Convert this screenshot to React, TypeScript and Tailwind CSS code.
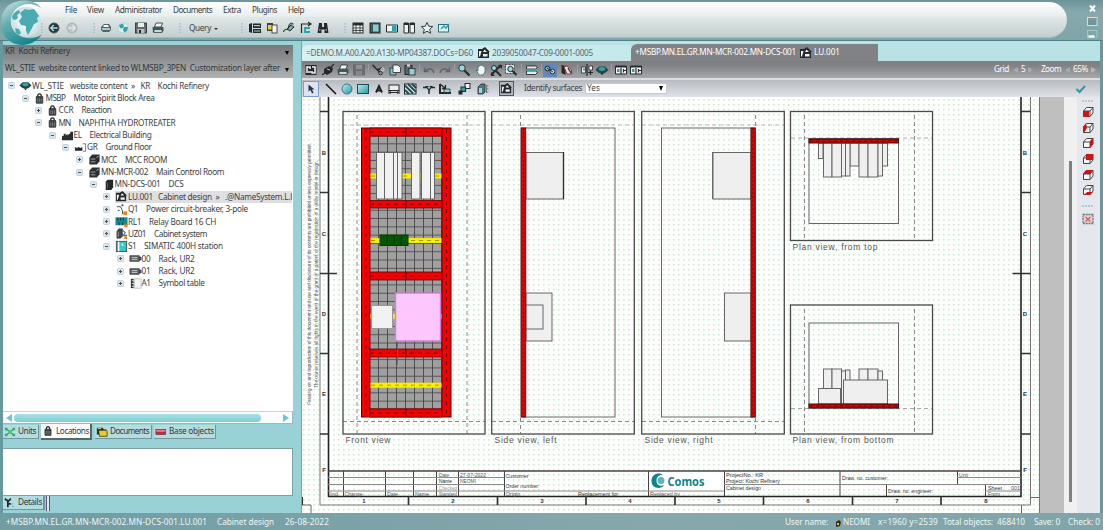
import { useLayoutEffect, useRef, useState } from "react";
import type { ReactNode } from "react";

const K = "#26292b";
const T = "#2aa3ac";

/** Single-line label whose letter spacing is adjusted to fill a given width. */
function Fit({ w, children, className = "" }: { w: number; children: string; className?: string }) {
  const ref = useRef<HTMLSpanElement>(null);
  const [ls, setLs] = useState(0);
  useLayoutEffect(() => {
    if (ref.current) {
      const natural = ref.current.getBoundingClientRect().width;
      setLs((w - natural) / children.length);
    }
  }, [w, children]);
  return (
    <span ref={ref} className={"inline-block shrink-0 whitespace-pre " + className} style={{ letterSpacing: ls }}>
      {children}
    </span>
  );
}

const glyphs: Record<string, ReactNode> = {
  back: (<><circle cx="7" cy="7" r="5" fill="#1d3a3e" stroke="#555" /><path d="M10.5 7H4M6.8 4L3.8 7l3 3" stroke="#a9dde0" strokeWidth="1.4" fill="none" /></>),
  forward: (<><circle cx="7" cy="7" r="5" fill="#bcc5c6" stroke="#a9b3b4" /><path d="M3.5 7H10M7.2 4l3 3-3 3" stroke="#dfe6e6" strokeWidth="1.4" fill="none" /></>),
  disk: (<><path d="M2 6l3-3h5l2 3v3l-2 2H4L2 9z" fill="#5a6163" /><path d="M3 7h8v2H3z" fill="#8fd6da" /><path d="M5 4h4l1 2H4z" fill="#f2f7f7" /></>),
  globe: (<><circle cx="7" cy="7" r="5" fill="#d9f1f3" stroke="#a9cdd0" strokeWidth=".6" /><path d="M3 4l4-1.500 1 3-2 2-2-.5zM8 6l4 0-1 4-3 1.500-1-3z" fill={T} /></>),
  save: (<><rect x="1.5" y="2" width="11" height="10" fill="#666b6e" stroke={K} strokeWidth=".8" /><rect x="4" y="2" width="6" height="4" fill="#e8eeee" /><rect x="3.5" y="8" width="7" height="4" fill="#b9c2c3" /><path d="M5 9h2v3H5z" fill={K} /></>),
  saveOff: (<><rect x="1.5" y="2" width="11" height="10" fill="#6d7073" stroke="#626568" strokeWidth=".8" /><rect x="4" y="2" width="6" height="4" fill="#909396" /><rect x="4" y="8" width="6" height="4" fill="#85888b" /></>),
  printer: (<><path d="M5 2h6.5L10 6H3.500z" fill="#f0f4f4" stroke={K} strokeWidth=".8" /><path d="M1.500 6h11v3.500L11 11.500H2z" fill="#4c5356" /><path d="M3 8.500h8v3H3z" fill="#b8dfe2" stroke={K} strokeWidth=".6" /></>),
  cabinet: (<><path d="M1 3l3-1v10l-3-1zM5 2.500h8V7H5zM5 8h8v4H5z" fill={K} /><path d="M6 4.700h6M6 10h6" stroke="#8fd6da" strokeWidth="1.200" /></>),
  copyYellow: (<><rect x="2" y="2" width="6" height="8" fill="#3c4144" /><rect x="3" y="4" width="4" height="4.500" fill="#e9d23a" /><rect x="7" y="4" width="5" height="8" fill="#f3f3f3" stroke={K} strokeWidth=".8" /></>),
  plug: (<><path d="M1.500 11c1-5 4 0 5-5s3-4 5-3M5 8l4-4 3 2-4 4z" stroke={K} fill="#7fa9ad" strokeWidth="1" /></>),
  path: (<><path d="M2.500 12V3h9M9 1l3 2-3 2" stroke={K} fill="none" strokeWidth="1.200" /><path d="M11 7H6v4h5" stroke={T} fill="none" strokeWidth="1.800" /></>),
  binoculars: (<><path d="M3 2h3v4h2V2h3l1.500 10h-4V8.500h-3V12h-4z" fill={K} /><path d="M3 9h1.500M9.500 9H11" stroke="#ddd" /></>),
  table: (<><rect x="2" y="2" width="10" height="10" fill="#eef3f3" stroke={K} /><path d="M2 4h10M2 7h10M2 9.500h10M5 4v8M9 4v8" stroke={K} strokeWidth=".8" /><path d="M2 2h10v2H2z" fill={K} /></>),
  book: (<><rect x="2" y="2" width="10" height="10" fill="#44575b" stroke={K} /><rect x="5" y="3.500" width="5.500" height="7" fill="#7fd0d5" /></>),
  doc: (<><path d="M1.500 4h11v7h-11z" fill="#eef6f6" stroke={K} /><path d="M7 5h4.500v5H7z" fill={T} /></>),
  panels: (<><path d="M2 2h4.500v10H2zM8 2h4.500v10H8z" fill="#eef4f4" stroke={K} /><path d="M2 2h4.500v2H2zM8 2h4.500v2H8z" fill={K} /></>),
  star: <path d="M7 1.500l1.700 3.700 4 .4-3 2.700.9 4L7 10.200 3.400 12.300l.9-4-3-2.700 4-.4z" fill="#e8f2f2" stroke={K} strokeWidth=".9" />,
  export: (<><rect x="1.500" y="3.500" width="10" height="7.500" fill="#dff1f2" stroke="#2f6f75" /><path d="M4 8l3-3 2 2 3-4" stroke={T} strokeWidth="1.500" fill="none" /></>),
  refresh: (<><rect x="1.500" y="2" width="11" height="10" fill={K} /><path d="M3 10V4h3v2M8 4h3v6H8V8M4 9h3" stroke="#f5f5f5" fill="none" strokeWidth="1.500" /></>),
  connector: (<><path d="M3 6l5-3 4 2-1 4-5 3-3-2z" fill="#24282a" /><path d="M1 12l4-3M10 4l3-3M5 7l4 2" stroke={K} strokeWidth="1.200" /><path d="M6 6l3 1" stroke="#8fd0d4" /></>),
  scissors: (<><path d="M1.500 2l7 7M6 7l5-2" stroke={K} strokeWidth="1.500" /><circle cx="9.500" cy="10" r="1.800" fill="none" stroke={K} /><circle cx="11.500" cy="6.500" r="1.500" fill="none" stroke="#dce5e6" /></>),
  copy: (<><path d="M2 5h6v7H2z" fill="#7cc5ca" stroke={K} strokeWidth=".8" /><path d="M5 2h5l2.500 2.500V9.500H5z" fill="#f4f4f4" stroke={K} strokeWidth=".8" /></>),
  paste: (<><rect x="2" y="2.500" width="7" height="9" fill="#5c6467" stroke={K} /><path d="M4 1.500h3v2H4z" fill="#ddd" /><rect x="6" y="5.500" width="6" height="6.500" fill="#8ecfd3" stroke={K} strokeWidth=".8" /></>),
  undo: <path d="M12 10c-1-5-6-5-9-2M2.500 4.500V8.500h4" stroke="#626568" strokeWidth="1.500" fill="none" />,
  redo: <path d="M2 10c1-5 6-5 9-2M11.500 4.500V8.500h-4" stroke="#626568" strokeWidth="1.500" fill="none" />,
  zoom: (<><path d="M7 7l5.500 5.500" stroke={K} strokeWidth="2.200" /><circle cx="5" cy="5" r="3.200" fill="#8edde2" stroke={K} strokeWidth=".9" /></>),
  hand: (<path d="M2 7l2 1V4l1.500-1L7 2l2 1 2 1v5l-2 3H5z" fill="#eef5f5" stroke="#3c6f74" strokeWidth=".8" />),
  zoomAll: (<><path d="M6 7l6 6M2 12L12 2" stroke={K} strokeWidth="1.800" /><path d="M9 2h4v4zM2 9v4h4z" fill={K} /><circle cx="5" cy="5" r="2.500" fill="#8edde2" stroke={K} /></>),
  zoomDoc: (<><rect x="1.500" y="1.500" width="9" height="9" fill="#e3eced" stroke={K} strokeWidth=".8" strokeDasharray="2 1" /><circle cx="6.500" cy="6" r="2.700" fill="#8edde2" stroke={K} /><path d="M8.500 8l4 4" stroke={K} strokeWidth="2" /></>),
  layers: (<><path d="M1.500 3h9l2 1.500-2 1.500h-9zM1.500 8h9l2 1.500-2 2h-9z" fill="#dfeeee" stroke={K} strokeWidth=".9" /><path d="M2 6h9v2H2z" fill={T} /></>),
  link: (<><circle cx="4.500" cy="5.500" r="2.400" fill="#6fc5cf" stroke={K} /><circle cx="9.500" cy="8.500" r="2.400" fill="#bfe3e6" stroke={K} /><path d="M4 5l6 4" stroke={K} /></>),
  pen: (<><path d="M1.500 2l4 1v9l-4-2z" fill={K} /><path d="M4 4l3 7 5 0-1-5-4-3z" fill="#e6e6e6" stroke="#9b2f2c" strokeWidth="1" /><path d="M8 5l3 5" stroke={K} strokeWidth="1.300" /></>),
  mirror: (<><path d="M1.500 4h4v6h-4zM9 3h3.500v4H9z" fill="#f0f4f4" stroke={K} strokeWidth=".8" /><path d="M7 1v12M8 9.500h5M10.500 8v4" stroke={K} strokeWidth="1.200" /><path d="M3 5.500h2v2H3z" fill={T} /></>),
  eye: (<><path d="M.5 7l3.500-3.500h6L13.500 7 10 10H4z" fill="#24464a" /><ellipse cx="7" cy="6" rx="3.300" ry="1.900" fill={T} /><path d="M5 10h4l-2 2z" fill={K} /></>),
  importDoc: (<><path d="M1.500 3h11v8h-11z" fill="#f2f5f5" stroke={K} /><path d="M1.500 3h11v1.500h-11z" fill={K} /><path d="M7 5v6M9 7.500h3M9.500 9.500V6" stroke={K} strokeWidth="1.200" /><path d="M3 6h2.500v3H3z" fill={T} /></>),
  arrow: (<path d="M4.500 2.500v7l2-1.500 1.500 3.500 1.500-.7L8 7.500h2.500z" fill="#24383b" />),
  line: <path d="M2 2l10 10" stroke="#111" strokeWidth="1.500" />,
  circle: <circle cx="7" cy="7" r="5" fill="url(#tealFill)" stroke="#2e5e63" strokeWidth=".8" />,
  square: <rect x="1.500" y="2.500" width="11" height="9" fill="url(#tealFill)" stroke="#1f4a4f" strokeWidth="1" />,
  letter: <path d="M4 10.500L7 4l3 6.500M5.200 8.500h3.600" stroke="#1c1f20" strokeWidth="1.800" fill="none" />,
  dims: (<><rect x="2" y="3" width="10" height="5.500" fill="#eee" stroke={K} /><path d="M2 8v4M12 8v4M2.500 10.500h9" stroke={K} /><path d="M4 9v3l-2-1.500zM10 9v3l2-1.500z" fill={K} /></>),
  hatch: (<><rect x="1.500" y="2" width="11.500" height="10" fill="#f2f7f7" stroke={K} /><path d="M2 3.500l8 8M2 8l4 4M5 2l8 8M9 2l4 4" stroke="#1d4e54" strokeWidth="2.100" /></>),
  node: (<><path d="M1 5.500h12" stroke={K} strokeWidth="1.500" /><path d="M3 4h8L7 9z" fill={K} /><path d="M7 8v4" stroke={K} strokeWidth="1.500" /><circle cx="7" cy="5.500" r="1.200" fill="#8fd6da" /></>),
  corner: (<><path d="M2 2v9h11" stroke={K} strokeWidth="2" fill="none" /><path d="M6 7h6v3.500H6z" fill="#8ecfd3" stroke={K} strokeWidth=".8" /><path d="M2 2l5 4M7.500 3v3.500H4" stroke={K} strokeWidth="1.300" fill="none" /></>),
  nodes: (<><rect x="8" y="1.500" width="5" height="5" fill="#eee" stroke={K} /><rect x="4" y="5" width="4.500" height="4.500" fill={T} stroke={K} /><rect x="1.500" y="8.500" width="4" height="4" fill={K} /></>),
  box3d: (<><path d="M2 5l3-3h4v8l-2 2H2z" fill="#50777b" stroke={K} strokeWidth=".8" /><path d="M3 6h3v5H3z" fill="#8edde2" /><path d="M10.500 3v8M12.500 4h-2M12.500 7h-2M12.500 10h-2" stroke="#70777a" /></>),
  panelHome: (<><path d="M1 3h4l3-2 5 5h-1v6H1z" fill={K} /><path d="M2 5h2.500L3 10.500H2zM7.500 3.500L10 6H6z" fill="#f1f3f3" /><path d="M6 8h4.500v2.500H6z" fill="#f1f3f3" /></>),
  bag: (<><path d="M3.500 5h7v7h-7z" fill="#43474a" stroke="#303335" /><path d="M5 5c0-4 4-4 4 0" stroke={K} strokeWidth="1.400" fill="none" /><path d="M5 7v4M7 7v4M9 7v4" stroke="#8b8f91" strokeWidth=".7" /></>),
  factory: (<path d="M1 12V8l2-1v-2h2v2l2-2v2l2-2h1V3h3v9z" fill="#2b2e30" />),
  floor: (<><path d="M1 10.500V6.500l2 1 2-1 2 1 2-1v4z" fill={K} /><path d="M9.500 3h3v8h-3" fill="none" stroke="#777" /></>),
  room: (<><path d="M1.500 5l3-3.500h8V9l-3 3.500h-8z" fill="#2b2e30" /><path d="M3 6.500h5M3 9.500h5" stroke="#b5babc" strokeWidth=".9" /><path d="M9.500 5l2-2" stroke="#ddd" /></>),
  rack: (<><path d="M4 4l2-2h6v8l-2 3H4z" fill="#242729" /><path d="M6 5v6" stroke="#777" strokeWidth=".7" /></>),
  breaker: (<><path d="M2 4h4M6 4l2 4v4M3 8h2" stroke="#444" fill="none" /><circle cx="8" cy="2.500" r="1.200" fill="#555" /><rect x="9" y="9" width="4" height="4" fill="#f07f1b" /></>),
  relay: (<><rect x=".5" y="2.500" width="13" height="8.500" fill="#138a91" /><path d="M3 3v3M6 3v3M9 3v3M4.500 8v3M8 8v3" stroke="#0a3e42" /><rect x="10" y="10" width="3.500" height="3" fill="#f07f1b" /></>),
  cabSys: (<><path d="M2 5l2-3h4v8l-2 2H2z" fill="#43484a" stroke={K} strokeWidth=".6" /><path d="M3.500 5.500v5" stroke="#bbb" strokeWidth=".8" /><path d="M8 3l3 3-2 3h4" stroke="#4a63d8" fill="none" strokeWidth="1.200" /><rect x="10" y="10" width="3" height="3" fill="#f07f1b" /></>),
  station: (<><rect x="1.500" y="1.500" width="11" height="11" fill="#35c9c9" stroke="#4b4b4b" /><path d="M4 2v10" stroke="#e6ffff" strokeWidth="1.500" /><path d="M7 4h2v2H7z" fill="#dff" /></>),
  unitRack: (<><path d="M1 4h10v6H1zM11 5.500h2v3h-2" fill="#606466" stroke="#333" strokeWidth=".8" /><path d="M3 6h6M3 8h6" stroke="#d8d8d8" strokeWidth=".9" /></>),
  symTable: (<><path d="M2 2h3v10H2z" fill="#333" /><rect x="6" y="2" width="7" height="10" fill="#f5f5f5" stroke="#aaa" strokeWidth=".7" /><path d="M3 4h3M3 7h3M3 10h3" stroke="#ddd" /></>),
  units: (<><path d="M2 3l10 8M12 3L2 11" stroke="#27a33c" strokeWidth="1.400" /><path d="M1 2h3v3H1zM10 2h3v3h-3zM1 9h3v3H1zM10 9h3v3h-3z" fill="#3a9ba5" /><circle cx="7" cy="7" r="2.500" fill="#43d65a" /></>),
  folders: (<><path d="M1 2h7l1 2h3v6H1z" fill="#2a2c2d" /><path d="M3 5h9l1 1v6H4z" fill="#e5d022" stroke="#222" strokeWidth=".8" /><path d="M2 3h4" stroke="#eee" /></>),
  base: (<><rect x="1" y="4" width="11.500" height="6" fill="#c9283a" stroke="#444" strokeWidth=".7" /><path d="M1.500 5h10.500v1.500H1.500z" fill="#f3a3aa" /></>),
  details: (<><path d="M1 2l4 3 3-3M4.500 5v7M4.500 8H8" stroke={K} strokeWidth="2" fill="none" /><path d="M8 7h2v2H8zM9 10h3v2H9z" fill="#79c3ca" /></>),
};

function Ico({ n, className = "h-3.5 w-3.5" }: { n: string; className?: string }) {
  return (
    <svg viewBox="0 0 14 14" className={"shrink-0 " + (className.includes("w-") ? className : "h-3.5 w-3.5 " + className)}>
      {glyphs[n]}
    </svg>
  );
}

function Grip() {
  return (
    <svg viewBox="0 0 2 12" className="h-3 w-0.5 shrink-0">
      <path d="M1 1v10" stroke="#8fc6ca" strokeWidth="1.500" strokeDasharray="1.500 1.500" />
    </svg>
  );
}

function Header() {
  return (
    <header className="relative flex h-[41px] shrink-0 border-b border-[#527f84] bg-[linear-gradient(#6b959a,#86a9ad_12px,#7fa5a9)]">
      <div className="ml-[2px] mt-[2px] flex h-9 w-[1065px] flex-col rounded-l-[18px] rounded-r-[18px] border-b border-[#a6bcbd] bg-[linear-gradient(#ffffff,#e9eeee_14px,#dfe6e6_16px,#c3cfcf)] text-[8.200px] text-[#3b4143]">
        <nav className="flex h-[17px] items-center pl-[63px]">
          <Fit w={12}>File</Fit>
          <Fit w={17} className="ml-[10px]">View</Fit>
          <Fit w={47} className="ml-[11px]">Administrator</Fit>
          <Fit w={39} className="ml-[11px]">Documents</Fit>
          <Fit w={18} className="ml-[11px]">Extra</Fit>
          <Fit w={25} className="ml-[11px]">Plugins</Fit>
          <Fit w={16} className="ml-[11px]">Help</Fit>
        </nav>
        <div className="flex h-[18px] items-center pl-[39px]">
          <Grip />
          <Ico n="back" className="ml-[4px]" />
          <Ico n="forward" className="ml-[4px]" />
          <div className="ml-[14px]"><Grip /></div>
          <Ico n="disk" className="ml-[4px]" />
          <Ico n="globe" className="ml-[3px]" />
          <Ico n="save" className="ml-[4px]" />
          <Ico n="printer" className="ml-[3px]" />
          <div className="ml-[14px]"><Grip /></div>
          <Fit w={22} className="ml-[8px]">Query</Fit>
          <span className="ml-[3px] mt-px h-0 w-0 border-x-2 border-t-2 border-x-transparent border-t-[#333]" />
          <div className="ml-[23px]"><Grip /></div>
          <Ico n="cabinet" className="ml-[5px]" />
          <Ico n="copyYellow" className="ml-[3px]" />
          <Ico n="plug" className="ml-[3px]" />
          <Ico n="path" className="ml-[3px]" />
          <Ico n="binoculars" className="ml-[3px]" />
          <div className="ml-[14px]"><Grip /></div>
          <Ico n="table" className="ml-[5px]" />
          <Ico n="book" className="ml-[3px]" />
          <Ico n="doc" className="ml-[3px]" />
          <Ico n="panels" className="ml-[3px]" />
          <Ico n="star" className="ml-[4px]" />
          <Ico n="export" className="ml-[3px]" />
        </div>
      </div>
      <svg viewBox="0 0 14 36" className="ml-[18px] mt-[2px] h-9 w-3.5">
        <path d="M5 3.500l5 6M10 3.500l-5 6" stroke="#fff" strokeWidth="2" />
        <rect x="2.500" y="15.500" width="9.500" height="8" fill="#6f979b" stroke="#cfe0e2" />
        <path d="M3 17h8.500" stroke="#9d8e8a" strokeWidth="2" />
        <rect x="2.500" y="28.500" width="9.500" height="7.500" fill="none" stroke="#a8c2c5" />
        <path d="M3.500 34.500h6" stroke="#fff" strokeWidth="2.500" />
      </svg>
      <svg viewBox="0 0 46 48" className="absolute left-0 top-0 z-10 h-12 w-[46px]">
        <defs>
          <linearGradient id="arc" x1="0" y1="0" x2=".6" y2="1">
            <stop offset="0" stopColor="#dcebec" />
            <stop offset=".45" stopColor="#65adb1" />
            <stop offset="1" stopColor="#12868b" />
          </linearGradient>
          <linearGradient id="tealFill" x1="0" y1="0" x2="1" y2="1">
            <stop offset="0" stopColor="#b9eef1" />
            <stop offset="1" stopColor="#249aa3" />
          </linearGradient>
          <radialGradient id="ball"><stop offset="0" stopColor="#fff" /><stop offset="1" stopColor="#cbdfe1" /></radialGradient>
        </defs>
        <path d="M41 8C35-1 19-2 9 5C-1 13-1 31 7 39C16 48 34 47 42 34C35 40 23 40 16 33C9 26 9 16 16 9C23 3 33 2 41 8Z" fill="url(#arc)" />
        <circle cx="26" cy="22" r="15" fill="url(#ball)" />
        <path d="M12 17c1-4 4-6 7-7l1 3-3 2 1 3-3 2c-2-1-3-1-3-3zM20 13l5-4 4 1 5-1 5 7-2 2 1 4-4 2-3 6-3 5-2-4 0-5-5-1-2-4 3-4zM33 10l4 2M15 28l4 1 2 4-2 2-3-2z" fill="#4aabb0" />
      </svg>
    </header>
  );
}

type Node = [depth: number, open: boolean, icon: string, code: string, codeW: number, label: string, gap: number, labelW: number];

function Toggle({ open }: { open: boolean }) {
  return (
    <svg viewBox="0 0 7 7" className="h-[7px] w-[7px] shrink-0">
      <rect x=".5" y=".5" width="6" height="6" rx="1" fill="#d9e5ee" stroke="#c3d2dd" />
      <path d={open ? "M2 3.500h3" : "M2 3.500h3M3.500 2v3"} stroke="#4a4f54" />
    </svg>
  );
}

const indents = ["pl-[5px]", "pl-[18.500px]", "pl-[31.500px]", "pl-[45.500px]", "pl-[59px]", "pl-[73px]", "pl-[86.500px]", "pl-[100px]", "pl-[113.500px]"];
const rows: Node[] = [
  [0, true, "eye", "WL_STIE", 32, "website content  »   KR    Kochi Refinery", 6, 139],
  [1, true, "bag", "MSBP", 20, "Motor Spirit Block Area", 8, 81],
  [2, false, "bag", "CCR", 15, "Reaction", 8, 30],
  [2, true, "bag", "MN", 12, "NAPHTHA HYDROTREATER", 8, 97],
  [3, true, "factory", "EL", 8, "Electrical Building", 8, 62],
  [4, true, "floor", "GR", 10.5, "Ground Floor", 8, 46],
  [5, false, "room", "MCC", 16, "MCC ROOM", 8, 42],
  [5, true, "room", "MN-MCR-002", 47, "Main Control Room", 8, 68],
  [6, true, "rack", "MN-DCS-001", 46, "DCS", 8, 15],
  [7, false, "panelHome", "LU.001", 25, "Cabinet design  »   .@NameSystem.L.l", 5, 134],
  [7, false, "breaker", "Q1", 10, "Power circuit-breaker, 3-pole", 8, 102],
  [7, false, "relay", "RL1", 13, "Relay Board 16 CH", 8, 67],
  [7, false, "cabSys", "UZ01", 18, "Cabinet system", 8, 53],
  [7, true, "station", "S1", 8, "SIMATIC 400H station", 8, 79],
  [8, false, "unitRack", "00", 9, "Rack, UR2", 8, 36],
  [8, false, "unitRack", "01", 9, "Rack, UR2", 8, 36],
  [8, false, "symTable", "A1", 9, "Symbol table", 8, 46],
];

function Tree() {
  return (
    <div className="h-[333px] overflow-hidden bg-white pt-[1.500px] text-[8.200px] text-[#3c4043]">
      {rows.map(([d, open, icon, code, cw, label, gap, lw]) => (
        <div key={d + code} className={"flex h-[12.370px] items-center " + indents[d]}>
          <Toggle open={open} />
          <div className={"flex h-[12px] items-center " + (code === "LU.001" ? "ml-[5px] bg-[#dfdfe2]" : d < 3 ? "ml-[4px]" : "ml-[5px]")}>
            <Ico n={icon} className="h-[13px] w-[13px]" />
            <Fit w={cw}>{code}</Fit>
            <Fit w={lw} className={gap === 8 ? "ml-[8px]" : gap === 6 ? "ml-[6px]" : "ml-[5px]"}>{label}</Fit>
          </div>
        </div>
      ))}
    </div>
  );
}

function LeftTab({ icon, label, w, active, className }: { icon: string; label: string; w: number; active?: boolean; className: string }) {
  return (
    <div className={"flex items-center border-b border-r pl-px " + (active ? "h-[16px] border-b-2 border-r-2 border-[#5c6668] bg-white " : "h-[14px] border-[#74969a] bg-[#b5dde0] ") + className}>
      <Ico n={icon} className="mr-[2px] h-[12px] w-[12px]" />
      <Fit w={w}>{label}</Fit>
    </div>
  );
}

function LeftPane() {
  return (
    <aside className="flex w-[290px] shrink-0 flex-col pt-[4px] text-[8.200px] text-[#30383a]">
      <div className="flex h-[14px] items-center justify-between bg-[linear-gradient(#77797b,#8b8d8f)] pl-[2px] pr-[4px] pb-[2px]">
        <Fit w={65}>KR  Kochi Refinery</Fit>
        <span className="mt-[3px] h-0 w-0 border-x-[2.500px] border-t-4 border-x-transparent border-t-black" />
      </div>
      <div className="flex h-[19px] items-center justify-between bg-[linear-gradient(#8e9092,#b0b1b3)] pl-[2px] pr-[4px]">
        <Fit w={275}>WL_STIE  website content linked to WLMSBP_3PEN  Customization layer after</Fit>
        <span className="mt-[3px] h-0 w-0 border-x-[2.500px] border-t-4 border-x-transparent border-t-black" />
      </div>
      <Tree />
      <div className="flex h-[13px] items-center border-b border-r border-t border-[#9bb] border-t-[#d2d2d2] bg-[#fbfdfd] pl-[3px] pr-[3px]">
        <span className="h-0 w-0 border-y-4 border-r-[6px] border-y-transparent border-r-[#6cc7ce]" />
        <span className="ml-[2px] h-[8px] w-[247px] rounded-full bg-[linear-gradient(#a8e0e4,#7ccfd5)]" />
        <span className="ml-auto h-0 w-0 border-y-4 border-l-[6px] border-y-transparent border-l-[#6cc7ce]" />
      </div>
      <div className="flex h-[24px] items-start">
        <LeftTab icon="units" label="Units" w={18} className="mt-px w-[36px]" />
        <LeftTab icon="bag" label="Locations" w={33} active className="ml-[2px] w-[51px]" />
        <LeftTab icon="folders" label="Documents" w={39} className="ml-[3px] mt-px w-[57px]" />
        <LeftTab icon="base" label="Base objects" w={45} className="ml-[2px] mt-px w-[62px]" />
      </div>
      <div className="h-[48px] border-b border-r border-t border-[#7ba1a5] bg-white" />
      <div className="flex h-[17px] items-start">
        <LeftTab icon="details" label="Details" w={24} className="w-[42px] border-r-2 border-[#57777b]" />
        <span className="ml-px h-[15px] w-[4px] border-x border-[#557] bg-[#dceaea]" />
      </div>
    </aside>
  );
}

function Sep() {
  return <span className="h-[12px] w-px shrink-0 bg-[#9b9da0]" />;
}

function TopTabs() {
  return (
    <div className="flex h-[20px] shrink-0 items-end bg-[#b8e2e6] text-[8.200px]">
      <div className="flex h-[16px] w-[329px] items-center rounded-tl-md bg-[linear-gradient(90deg,#d7f0f2,#c4e9ec)] pl-[4px] text-[#5a6669]">
        <Fit w={167}>=DEMO.M.A00.A20.A130-MP04387.DOCs=D60</Fit>
        <Ico n="panelHome" className="ml-[4px]" />
        <Fit w={101} className="ml-px">2039050047-C09-0001-0005</Fit>
      </div>
      <div className="flex h-[17px] w-[247px] items-center rounded-tl-md bg-[#808285] pl-[4px] text-white">
        <Fit w={161}>+MSBP.MN.EL.GR.MN-MCR-002.MN-DCS-001</Fit>
        <Ico n="panelHome" className="ml-[3px]" />
        <Fit w={26} className="ml-px">LU.001</Fit>
      </div>
    </div>
  );
}

function Toolbars() {
  return (
    <>
      <div className="flex h-[17px] shrink-0 items-center bg-[linear-gradient(#7b7d80,#828487_5px,#a6a8aa)] pl-[2px] text-[8.200px] text-white">
        <Ico n="refresh" />
        <Ico n="connector" className="ml-[3px]" />
        <Ico n="printer" className="ml-px" />
        <Ico n="saveOff" className="ml-[2px]" />
        <span className="w-[2px]" /><Sep />
        <Ico n="scissors" className="ml-[2px]" />
        <Ico n="copy" className="ml-[3px]" />
        <Ico n="paste" className="ml-px" />
        <span className="w-[2px]" /><Sep />
        <Ico n="undo" className="ml-[2px]" />
        <Ico n="redo" className="ml-[2px]" />
        <span className="w-[2px]" /><Sep />
        <Ico n="zoom" className="ml-[2px]" />
        <Ico n="hand" className="ml-[3px]" />
        <Ico n="zoomAll" className="ml-px" />
        <Ico n="zoomDoc" className="ml-px" />
        <span className="w-[3px]" /><Sep />
        <Ico n="layers" className="ml-[3px]" />
        <span className="w-[2px]" /><Sep />
        <Ico n="link" className="ml-px bg-[#6387b8]" />
        <Ico n="pen" className="ml-[3px]" />
        <span className="w-[3px]" /><Sep />
        <Ico n="mirror" className="ml-[2px]" />
        <Ico n="eye" className="ml-px" />
        <span className="w-[2px]" /><Sep />
        <Ico n="importDoc" className="ml-[2px]" />
        <Ico n="importDoc" className="ml-px" />
        <Fit w={15} className="ml-auto">Grid</Fit>
        <span className="ml-[4px] h-0 w-0 border-y-[3px] border-r-[5px] border-y-transparent border-r-[#a9abad]" />
        <Fit w={4} className="ml-[3px]">5</Fit>
        <span className="ml-[3px] h-0 w-0 border-y-[3px] border-l-[5px] border-y-transparent border-l-[#a9abad]" />
        <Fit w={20} className="ml-[8px]">Zoom</Fit>
        <span className="ml-[4px] h-0 w-0 border-y-[3px] border-r-[5px] border-y-transparent border-r-[#a9abad]" />
        <Fit w={15} className="ml-[3px]">65%</Fit>
        <span className="ml-[3px] mr-[4px] h-0 w-0 border-y-[3px] border-l-[5px] border-y-transparent border-l-[#b5b7b9]" />
      </div>
      <div className="flex h-[19px] shrink-0 items-center border-t-2 border-[#dcdee1] bg-[linear-gradient(#b7babf,#dfe2e8)] pl-px text-[8.200px] text-[#3b3f42]">
        <span className="flex h-[16px] w-[16px] items-center justify-center border border-[#7d9ccc] bg-[#dde4f0]"><Ico n="arrow" /></span>
        <Ico n="line" className="ml-[5px]" />
        <Ico n="circle" className="ml-[2px]" />
        <Ico n="square" className="ml-[2px]" />
        <Ico n="letter" className="ml-[1.500px]" />
        <Ico n="dims" className="ml-[1.500px]" />
        <Ico n="hatch" className="ml-[2px]" />
        <span className="ml-[2px]"><Sep /></span>
        <Ico n="node" className="ml-[2.500px]" />
        <Ico n="corner" className="ml-[2.500px]" />
        <Ico n="nodes" className="ml-[4.500px]" />
        <Ico n="box3d" className="ml-[5.500px]" />
        <span className="ml-[4px]"><Sep /></span>
        <span className="ml-[5px] flex h-[15px] w-[15px] items-center justify-center border border-[#555] bg-[#b7babd]"><Ico n="panelHome" className="h-[13px] w-[13px]" /></span>
        <Fit w={58} className="ml-[10px]">Identify surfaces</Fit>
        <span className="ml-[3px] flex h-[11px] w-[82px] items-center justify-between border border-[#c5c8cc] bg-white px-px">
          <Fit w={13}>Yes</Fit>
          <span className="mr-[2px] h-0 w-0 border-x-[2.500px] border-t-[5px] border-x-transparent border-t-black" />
        </span>
        <svg viewBox="0 0 12 10" className="ml-auto mr-[13px] h-[10px] w-3"><path d="M1.500 5l3 3L10 2" stroke="#2e97a1" strokeWidth="2" fill="none" /></svg>
      </div>
    </>
  );
}

type Box = [x1: number, y1: number, x2: number, y2: number];

function R({ b, fill = "none", stroke = "#666", sw = 1 }: { b: Box; fill?: string; stroke?: string; sw?: number }) {
  return <rect x={b[0]} y={b[1]} width={b[2] - b[0]} height={b[3] - b[1]} fill={fill} stroke={stroke} strokeWidth={sw} />;
}

function Label({ x, y, w, s, size = 8.5, fill = "#555" }: { x: number; y: number; w: number; s: string; size?: number; fill?: string }) {
  return <text x={x} y={y} textLength={w} lengthAdjust={size > 8 ? "spacing" : "spacingAndGlyphs"} fontSize={size} fill={fill}>{s}</text>;
}

const ticks = [111.5, 192.5, 273.5, 353.5, 434];
const rails: Box[] = [[362, 128, 451, 136], [362, 200.5, 451, 208], [362, 272, 451, 280], [362, 349, 451, 357], [362, 409, 451, 417]];
const topModules: Box[] = [
  [818.5, 143, 823, 158.5], [850, 143, 859, 166], [882.5, 143, 887.5, 166], [823.5, 143, 832, 177], [832, 143, 841.5, 177],
  [841.5, 143, 845.5, 176], [845.5, 143, 850, 176], [859, 143, 868, 177], [868, 143, 878, 177], [878, 143, 882.5, 176],
];
const bottomModules: Box[] = [
  [823.5, 369, 832, 404], [832, 369, 841.5, 404], [841.5, 371, 845.5, 404], [845.5, 370, 850, 404], [859, 369, 868, 404],
  [868, 369, 878, 404], [878, 371, 882.5, 404], [818.5, 388.5, 840.5, 404], [843.5, 380, 887.5, 404],
];

function Drawing() {
  const G = "#efefef";
  return (
    <svg viewBox="302 97 738 416" className="h-[416px] w-[738px] shrink-0 bg-white" fontFamily="Liberation Sans, sans-serif">
      <defs>
        <pattern id="dots" x="303" y="99" width="5" height="5" patternUnits="userSpaceOnUse"><rect width="1.600" height="1.600" fill="#cdeccd" /></pattern>
        <pattern id="mesh" x="370" y="136" width="9" height="8.300" patternUnits="userSpaceOnUse"><rect width="9" height="8.300" fill="#a0a0a0" /><path d="M8.500 0v8.300M0 7.800h9" stroke="#4a4a4a" strokeWidth=".9" /></pattern>
      </defs>
      <rect x="302" y="97" width="738" height="416" fill="url(#dots)" />

      <g stroke="#333" fill="none">
        <path d="M320 97V505H1030.500V97" stroke="#777" />
        <path d="M328.500 97V496.500H1021V97" stroke="#222" strokeWidth="1.600" />
        {ticks.map((y) => <path key={y} d={`M320 ${y}h8.500M1021 ${y}h9.500`} strokeWidth="1.500" />)}
        <path d="M328 273.500h9M1012.500 273.500h9" strokeWidth="1.500" />
        {[408.5, 497.5, 586, 675, 763.5, 852.5, 941].map((x) => <path key={x} d={`M${x} 496v9`} strokeWidth="1.700" />)}
        <path d="M302 505h9v8M1021.500 505v8M1030 497.500h9" stroke="#666" />
        <path d="M302.500 497v8" />
        <path d="M1039.500 97v416" stroke="#777" />
      </g>
      <g fontSize="6" fontWeight="bold" fill="#333" textAnchor="middle">
        {["B", "C", "D", "E", "F"].map((c, i) => [324, 1025].map((x) => <text key={c + x} x={x} y={[155, 235.5, 316, 396, 472][i]}>{c}</text>))}
        {[364, 453, 542, 630, 719, 808, 897, 986].map((x, i) => <text key={x} x={x} y="503.200">{i + 1}</text>)}
      </g>

      <g fill="#555" fontSize="5.200">
        <text transform="translate(311 405) rotate(-90)" textLength="262" lengthAdjust="spacingAndGlyphs">Passing on and reproduction of this document and use and disclosure of its contents are prohibited unless expressly permitted.</text>
        <text transform="translate(317.500 388) rotate(-90)" textLength="228" lengthAdjust="spacingAndGlyphs">The owner reserves all rights in the event of the grant of a patent or the registration of a utility model or design.</text>
      </g>

      <g stroke="#888" strokeDasharray="4 3" fill="none">
        <path d="M357 115V434M467 115V434" />
        <path d="M343 125h142M492 125h142M642 125h142" stroke="#bbb" />
        <path d="M343 421.500h142M492 421.500h142M642 421.500h142" />
        <path d="M520.500 115v13M520.500 418v16M755.500 115v13M755.500 418v16" />
        <path d="M804.500 115v125M914.500 115v125M804.500 309v125M914.500 309v125" />
        <path d="M791 138h141M791 408.500h141" stroke="#aaa" />
      </g>
      {([[343, 111.5, 485, 434], [491.7, 111.5, 634.3, 434], [641.7, 111.5, 784.3, 434], [790.5, 111.5, 932.5, 240.5], [790.5, 305, 932.5, 434]] as Box[]).map((b) => (
        <R key={b.join()} b={b} stroke="#4a4a4a" sw={1.3} />
      ))}

      <R b={[361.5, 128, 451, 417]} fill="#f40000" stroke="#5a0000" />
      <R b={[370, 136, 442, 409]} fill="url(#mesh)" stroke="#7a0000" />
      {rails.map((b) => (
        <g key={b[1]}>
          <R b={[370, b[1], 442, b[3]]} fill="#f40000" stroke="#6a0000" sw={0.8} />
          <path d={`M370 ${(b[1] + b[3]) / 2}H442`} stroke="#7a0000" strokeDasharray="4 4" />
          <path d={`M406 ${b[1]}V${b[3]}`} stroke="#5a0000" />
        </g>
      ))}
      <path d="M366 129V416M446.500 129V416" stroke="#6a0000" strokeDasharray="4 4" />
      {[173.5, 238, 314, 382.7].map((y) => (
        <g key={y}>
          <rect x="370.500" y={y} width="71" height="5" fill="#f8ee00" />
          <path d={`M371 ${y + 2.5}h71`} stroke="#a39a00" strokeDasharray="4 4" />
        </g>
      ))}
      {([[376.5, 152.5, 384.5, 199], [384.5, 152.5, 393.5, 199], [393.5, 152.5, 397.5, 199], [397.5, 152.5, 402, 199], [411.5, 152.5, 420, 199], [421.5, 152.5, 430.5, 199], [430.5, 152.5, 434.5, 199]] as Box[]).map((b) => (
        <R key={b[0]} b={b} fill="#f1f1f1" stroke="#666" />
      ))}
      <R b={[380, 235, 408, 245.5]} fill="#045504" stroke="#033d03" />
      <path d="M387 235v10M394 235v10M401 235v10" stroke="#033f03" />
      <R b={[371.5, 305.5, 392.5, 328.5]} fill="#f2f2f2" stroke="#999" />
      <R b={[395.5, 293, 440.5, 341]} fill="#fcc7fc" stroke="#cf7fd6" sw={1.4} />
      <path d="M397.500 342v23" stroke="#a33a9b" strokeWidth=".8" />

      <R b={[521, 128, 615, 417]} />
      <R b={[526, 152.5, 563.5, 199]} fill={G} />
      <path d="M563.500 152v47M713 152v47" stroke="#333" strokeWidth="1.400" />
      <R b={[526, 293, 552, 341]} fill={G} />
      <R b={[526, 305, 543, 329]} fill={G} />
      <R b={[661.5, 128, 755, 417]} />
      <R b={[713, 152.5, 751, 199]} fill={G} />
      <R b={[724.5, 293, 751, 341]} fill={G} />
      {[521.3, 750.9].map((x) => (
        <g key={x}>
          <R b={[x, 128, x + 4.4, 417]} fill="#e00000" stroke="#4a2222" />
          <path d={`M${x + 2.2} 128V417`} stroke="#820000" strokeDasharray="2 2" />
        </g>
      ))}

      <R b={[809, 138.5, 898.5, 223.5]} />
      {topModules.map((b) => <R key={b[0]} b={b} fill={G} />)}
      <R b={[809, 323, 898.5, 408]} />
      {bottomModules.map((b) => <R key={b[0]} b={b} fill={G} />)}
      {[139, 404].map((y) => (
        <g key={y}>
          <R b={[809, y, 898.5, y + 4]} fill="#d40000" stroke="#3a1010" />
          <path d={`M810 ${y + 2}h88`} stroke="#7a0000" strokeDasharray="3 3" />
        </g>
      ))}

      <Label x={345.500} y={443} w={45} s="Front view" />
      <Label x={494.500} y={443} w={62} s="Side view, left" />
      <Label x={644.500} y={443} w={68} s="Side view, right" />
      <Label x={792.500} y={250} w={85} s="Plan view, from top" />
      <Label x={792.500} y={443} w={101} s="Plan view, from bottom" />

      <rect x="648" y="471" width="76" height="20" fill="#fff" />
      <g stroke="#444" fill="none">
        <path d="M328 471h693" strokeWidth="1.500" />
        <path d="M343.500 471v25M385.500 471v25M413.500 471v25M436.500 471v25M458.500 471v25M504.500 471v25M648.500 471v25M724.500 471v25M840 471v25M886.500 484v12M957.500 471v13M985.500 484v12" />
        <path d="M328 477.500h176M328 484.500h176M328 491h396M724 484.500h297M957 477.500h64M985 491h36" stroke="#888" />
      </g>
      <path d="M663.500 475.500c-4-4-12-2-12 5.500s9 9 13 4c-4 2-8 0-8-4s3-7 7-5.500z" fill="#0f858b" />
      <circle cx="661" cy="480.500" r="3.500" fill="#5fb4b8" />
      <text x="667.500" y="486" textLength="37" lengthAdjust="spacingAndGlyphs" fontSize="12" fontWeight="bold" fill="#0f858b" fontFamily="Noto Sans">Comos</text>
      <Label x={439} y={476.700} w={10} s="Date" size={5} />
      <Label x={460} y={476.700} w={26} s="27-07-2022" size={5} />
      <Label x={439} y={483} w={13} s="Name" size={5} fill="#222" />
      <Label x={460} y={483} w={16} s="NEOMI" size={5} />
      <Label x={439} y={489.500} w={18} s="Checked" size={5} fill="#999" />
      <Label x={439} y={496} w={18} s="Standard" size={5} />
      <Label x={330} y={495.800} w={8} s="Ind" size={5} />
      <Label x={344.500} y={495.800} w={18} s="Change" size={5} />
      <Label x={387} y={495.800} w={11} s="Date" size={5} />
      <Label x={415} y={495.800} w={14} s="Name" size={5} />
      <Label x={505.500} y={478} w={23} s="Customer" size={5} fill="#333" />
      <Label x={505.500} y={487.500} w={34} s="Order number:" size={5} fill="#333" />
      <Label x={505.500} y={495.800} w={15} s="Origin" size={5} />
      <Label x={578} y={495.800} w={40} s="Replacement for" size={5} fill="#333" />
      <Label x={650} y={495.800} w={30} s="Replaced by" size={5} />
      <Label x={726} y={476.500} w={37} s="ProjectNo.: KR" size={5} fill="#333" />
      <Label x={726} y={483} w={54} s="Project: Kochi Refinery" size={5} fill="#333" />
      <Label x={726} y={490} w={35} s="Cabinet design" size={5} fill="#333" />
      <Label x={842} y={480} w={46} s="Draw. no. customer:" size={5} fill="#333" />
      <Label x={888} y={492.500} w={45} s="Draw. no. engineer:" size={5} fill="#333" />
      <Label x={959} y={476.500} w={9} s="Unit" size={5} />
      <Label x={988} y={490} w={14} s="Sheet" size={5} fill="#333" />
      <Label x={1011} y={490} w={9} s="001" size={5} />
      <Label x={988} y={496} w={12} s="From" size={5} />
    </svg>
  );
}

const faces = ["M2 6h6v6H2z", "M2 6l3-4 1 5-3 5z", "M9 5l3-3v6l-3 4z", "M5 2h7v6H5z", "M2 6l3-4h7L9 6z", "M3 12l3-3h6l-3 3z"];

function SideTools() {
  return (
    <div className="flex flex-1 flex-col items-center bg-[#e4e7ed] pr-px">
      <svg viewBox="0 0 12 2" className="mt-[3px] h-0.5 w-3"><path d="M0 1h12" stroke="#7fb0b5" strokeDasharray="2 1" /></svg>
      <div className="mt-[4px] flex flex-col gap-[3.700px]">
        {faces.map((d) => (
          <svg key={d} viewBox="1 1 12 12" className="h-[12px] w-[12px]">
            <path d="M2.500 6l3-3.500H12V8l-3 3.500H2.500zM2.500 6H9v5.500M9 6l3-3.500" fill="#f8f8f8" stroke="#444" strokeWidth="1" />
            <path d={d} fill="#c81515" />
          </svg>
        ))}
      </div>
      <svg viewBox="0 0 12 2" className="mt-[9px] h-0.5 w-3"><path d="M0 1h12" stroke="#7fb0b5" strokeDasharray="2 1" /></svg>
      <svg viewBox="0 0 12 12" className="mt-[6px] h-3 w-3"><rect x="1" y="1.500" width="10" height="9" fill="#dcd5d8" stroke="#777" strokeWidth="1.300" strokeDasharray="2 .7" /><path d="M3.500 4l5 4.500M8.500 4l-5 4.500" stroke="#e0555a" strokeWidth="1.200" /></svg>
    </div>
  );
}

function StatusBar() {
  return (
    <footer className="flex h-[17px] shrink-0 items-center bg-[linear-gradient(90deg,#6f9da2,#86a8ac_60%,#7fa5aa)] pl-[6px] pr-[3px] pt-[2px] text-[8.200px] text-[#eef6f6]">
      <Fit w={201}>+MSBP.MN.EL.GR.MN-MCR-002.MN-DCS-001.LU.001</Fit>
      <Fit w={57} className="ml-[10px]">Cabinet design</Fit>
      <Fit w={44} className="ml-[11px]">26-08-2022</Fit>
      <Fit w={43} className="ml-auto">User name:</Fit>
      <svg viewBox="0 0 6 8" className="ml-[7px] h-2 w-1.5"><path d="M1 3l3-2 2 2-1 4-4 1z" fill="#2b2b20" /><path d="M2 4h2v2H2z" fill="#e3cc20" /></svg>
      <Fit w={27} className="ml-[2px]">NEOMI</Fit>
      <Fit w={60} className="ml-[8px]">x=1960 y=2539</Fit>
      <Fit w={82} className="ml-[5px]">Total objects:  468410</Fit>
      <Fit w={26} className="ml-[9px]">Save: 0</Fit>
      <Fit w={32} className="ml-[8px]">Check: 0</Fit>
    </footer>
  );
}

export default function App() {
  return (
    <div className="flex h-[530px] w-[1103px] flex-col overflow-hidden bg-[#98d2d7] leading-none [font-family:'Noto_Sans',sans-serif]">
      <Header />
      <main className="flex h-[472px] shrink-0 border-l-[3px] border-r-[3px] border-[#65999e]">
        <LeftPane />
        <section className="ml-[8px] flex flex-1 flex-col border-l border-[#6fa9ae]">
          <TopTabs />
          <Toolbars />
          <div className="flex h-[416px]">
            <Drawing />
            <div className="w-[24px] shrink-0 bg-[#bfbfbf]" />
            <div className="flex w-[13px] shrink-0 justify-center bg-[#f0f0f1]">
              <div className="mt-[64px] h-[341px] w-[3px] bg-[#808080]" />
            </div>
            <SideTools />
          </div>
        </section>
      </main>
      <StatusBar />
    </div>
  );
}
